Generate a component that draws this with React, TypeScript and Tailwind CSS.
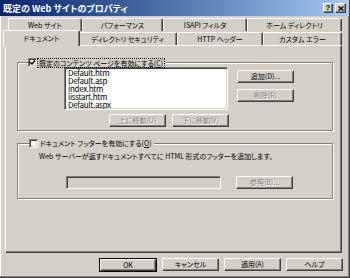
import React from "react";

const FONT = "font-['Noto_Sans_CJK_JP','Noto_Sans_CJK_SC',sans-serif] [font-feature-settings:'palt'] antialiased";

function Btn({
  label,
  w = "w-[57px]",
  disabled = false,
  isDefault = false,
}: {
  label: string;
  w?: string;
  disabled?: boolean;
  isDefault?: boolean;
}) {
  const inner = (
    <div
      className={`${isDefault ? "" : w} h-full flex items-center justify-center bg-[#d4d0c8] border-t border-l border-t-white border-l-white border-r border-b border-r-[#404040] border-b-[#404040] shadow-[inset_-1px_-1px_0_#808080] text-[7px] leading-none whitespace-nowrap ${
        disabled ? "text-[#808080] [text-shadow:1px_1px_0_#ffffff]" : "text-black"
      }`}
    >
      {label}
    </div>
  );
  if (isDefault) {
    return <div className={`${w} h-[14px] border border-black flex flex-col`}>{inner}</div>;
  }
  return <div className={`${w} h-[13px] flex flex-col`}>{inner}</div>;
}

function Checkbox({ checked }: { checked: boolean }) {
  return (
    <div className="w-[9px] h-[9px] shrink-0 bg-white border-t border-l border-t-[#808080] border-l-[#808080] border-r border-b border-r-white border-b-white shadow-[inset_1px_1px_0_#404040,inset_-1px_-1px_0_#d4d0c8] flex items-center justify-center">
      {checked && (
        <svg width="7" height="7" viewBox="0 0 7 7">
          <path d="M1 3 L3 5 L6 1.5" stroke="black" strokeWidth="1.4" fill="none" />
        </svg>
      )}
    </div>
  );
}

function Tab({ label, w, selected = false }: { label: string; w: string; selected?: boolean }) {
  return (
    <div
      className={`${w} ${
        selected ? "h-[16px] -mb-[1px] relative z-10 -mx-[2px]" : "h-[13px]"
      } bg-[#d4d0c8] border-t border-l border-t-white border-l-white border-r border-r-[#404040] shadow-[inset_-1px_0_0_#808080] rounded-tl-[2px] rounded-tr-[2px] flex items-center justify-center text-[7px] leading-none text-black whitespace-nowrap`}
    >
      {label}
    </div>
  );
}

export default function App() {
  return (
    <div
      className={`w-[350px] h-[278px] bg-[#d4d0c8] flex flex-col border-r border-b border-r-[#404040] border-b-[#404040] shadow-[inset_-1px_-1px_0_#808080,inset_1px_0_0_#ffffff] overflow-hidden ${FONT}`}
    >
      {/* Title bar */}
      <div className="h-[16px] bg-gradient-to-r from-[#0a246a] to-[#a6caf0] flex items-center pl-[3px] pr-[3px]">
        <span className="text-white font-bold text-[9px] leading-none whitespace-nowrap">
          既定の Web サイトのプロパティ
        </span>
        <div className="ml-auto flex gap-[2px]">
          <div className="w-[10px] h-[10px] bg-[#d4d0c8] border-t border-l border-t-white border-l-white border-r border-b border-r-[#404040] border-b-[#404040] shadow-[inset_-1px_-1px_0_#808080] flex items-center justify-center text-[8px] font-bold leading-none text-black font-['Liberation_Sans',sans-serif]">
            ?
          </div>
          <div className="w-[11px] h-[10px] bg-[#d4d0c8] border-t border-l border-t-white border-l-white border-r border-b border-r-[#404040] border-b-[#404040] shadow-[inset_-1px_-1px_0_#808080] flex items-center justify-center">
            <svg width="6" height="5" viewBox="0 0 6 5">
              <path d="M0.5 0.5 L5.5 4.5 M5.5 0.5 L0.5 4.5" stroke="black" strokeWidth="1.3" />
            </svg>
          </div>
        </div>
      </div>

      {/* Tabs + panel */}
      <div className="pl-[5px] pt-[4px] w-[342px]">
        <div className="flex ml-[3px] h-[11px] items-end">
          <Tab label="Web サイト" w="w-[74px]" />
          <Tab label="パフォーマンス" w="w-[81px]" />
          <Tab label="ISAPI フィルタ" w="w-[84px]" />
          <Tab label="ホーム ディレクトリ" w="w-[95px]" />
        </div>
        <div className="flex h-[14px] items-end">
          <Tab label="ドキュメント" w="w-[77px]" selected />
          <Tab label="ディレクトリ セキュリティ" w="w-[99px]" />
          <Tab label="HTTP ヘッダー" w="w-[86px]" />
          <Tab label="カスタム エラー" w="w-[79px]" />
        </div>
        {/* Panel */}
        <div className="w-[337px] h-[208px] border-t border-l border-t-white border-l-white border-r border-b border-r-[#404040] border-b-[#404040] shadow-[inset_-1px_-1px_0_#808080] pt-[16px] pl-[11px]">
          {/* Group 1 */}
          <div className="relative w-[316px] h-[69px] border border-[#808080] shadow-[inset_1px_1px_0_#ffffff,1px_1px_0_#ffffff]">
            <div className="absolute left-[10px] -top-[5px] flex items-center gap-[1px] bg-[#d4d0c8] pr-[2px]">
              <Checkbox checked />
              <span className="text-[7px] leading-[8px] text-black outline outline-1 outline-dotted outline-black px-[1px] whitespace-nowrap">
                既定のコンテンツ ページを有効にする(<span className="underline">C</span>)
              </span>
            </div>
            <div className="flex pl-[46px] pt-[4px]">
              <div className="flex flex-col">
                <div className="w-[164px] h-[43px] bg-white border-t border-l border-t-[#808080] border-l-[#808080] border-r border-b border-r-white border-b-white shadow-[inset_1px_1px_0_#404040,inset_-1px_-1px_0_#d4d0c8] pl-[3px] pt-[1px] text-[8px] tracking-[-0.3px] leading-[8px] text-black overflow-hidden">
                  <div>Default.htm</div>
                  <div>Default.asp</div>
                  <div>index.htm</div>
                  <div>iisstart.htm</div>
                  <div>Default.aspx</div>
                </div>
                <div className="flex gap-[6px] pl-[45px] pt-[4px]">
                  <Btn label="上に移動(U)" disabled />
                  <Btn label="下に移動(V)" disabled />
                </div>
              </div>
              <div className="flex flex-col gap-[6px] pl-[8px] pt-[3px]">
                <Btn label="追加(D)..." />
                <Btn label="削除(R)" disabled />
              </div>
            </div>
          </div>

          {/* Group 2 */}
          <div className="relative mt-[12px] w-[316px] h-[56px] border border-[#808080] shadow-[inset_1px_1px_0_#ffffff,1px_1px_0_#ffffff]">
            <div className="absolute left-[11px] -top-[5px] flex items-center gap-[2px] bg-[#d4d0c8] pr-[2px]">
              <Checkbox checked={false} />
              <span className="text-[7px] leading-none text-black whitespace-nowrap">
                ドキュメント フッターを有効にする(<span className="underline">O</span>)
              </span>
            </div>
            <div className="pl-[21px] pt-[9px] text-[7px] leading-none text-black whitespace-nowrap">
              Web サーバーが返すドキュメントすべてに HTML 形式のフッターを追加します。
            </div>
            <div className="flex items-start pl-[48px] pt-[16px]">
              <div className="w-[155px] h-[13px] bg-[#d4d0c8] border-t border-l border-t-[#808080] border-l-[#808080] border-r border-b border-r-white border-b-white shadow-[inset_1px_1px_0_#404040,inset_-1px_-1px_0_#d4d0c8]" />
              <div className="pl-[15px]">
                <Btn label="参照(B)..." disabled />
              </div>
            </div>
          </div>
        </div>
      </div>

      {/* Bottom buttons */}
      <div className="flex justify-end gap-[5px] pr-[6px] pt-[5px]">
        <Btn label="OK" isDefault w="w-[58px]" />
        <Btn label="キャンセル" />
        <Btn label="適用(A)" />
        <Btn label="ヘルプ" />
      </div>
    </div>
  );
}
